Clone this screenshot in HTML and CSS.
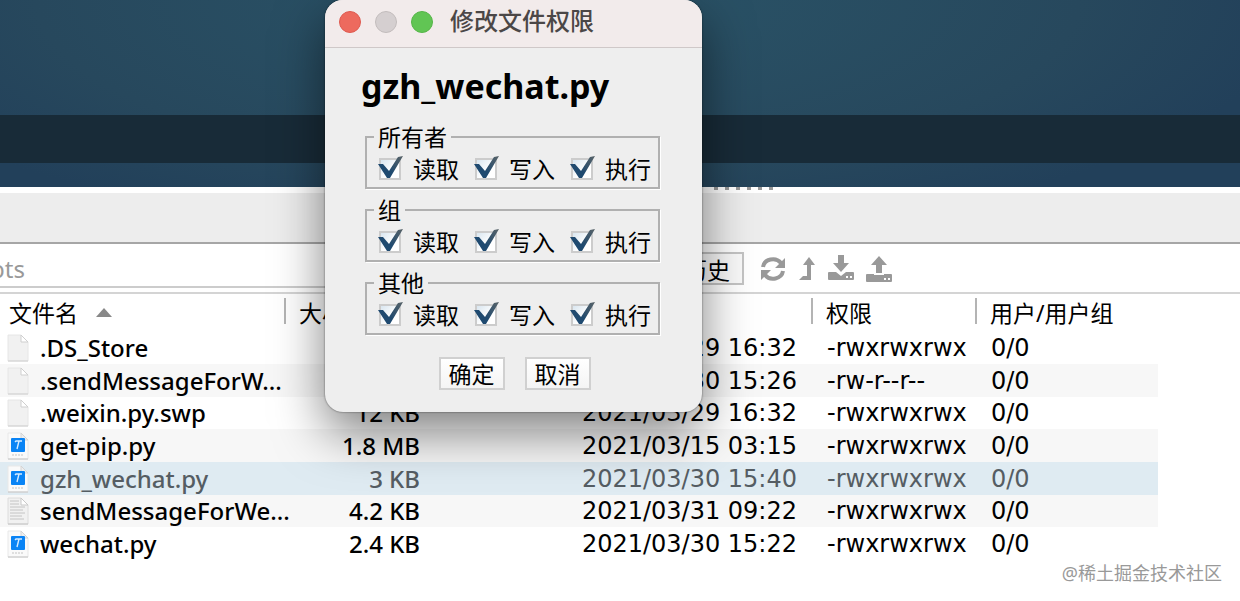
FILE: index.html
```html
<!DOCTYPE html>
<html lang="zh-CN">
<head>
    <meta charset="UTF-8">
    <meta name="viewport" content="width=device-width, initial-scale=1.0">
    <title>修改文件权限</title>
    <link rel="stylesheet" href="styles.css">
</head>
<body>
    <svg class="sprite" aria-hidden="true">
        <symbol id="blank" viewBox="0 0 22 28">
            <path d="M1 1h13l7 7v19H1z" fill="#f1f1f1" stroke="#e6e6e6"/>
            <path d="M1 27h20" stroke="#cfcfcf"/>
            <path d="M14 1v7h7z" fill="#fff" stroke="#cfcfcf"/>
        </symbol>
        <symbol id="python" viewBox="0 0 22 28">
            <path d="M1 1h13l7 7v19H1z" fill="#fafafa" stroke="#e8e8e8"/>
            <path d="M1 27h20" stroke="#c4c4c4"/>
            <path d="M14 1v7h7z" fill="#eee" stroke="#d4d4d4"/>
            <rect x="4" y="6" width="14" height="14" rx="1" fill="#0a84f5"/>
            <path d="M8 10l1-1h6M12 9l-2 8" fill="none" stroke="#d6ebff" stroke-width="1.4"/>
            <path d="M5 23h12" stroke="#c4c4c4" stroke-dasharray="2 1"/>
        </symbol>
        <symbol id="text" viewBox="0 0 22 28">
            <path d="M1 1h13l7 7v19H1z" fill="#f1f1f1" stroke="#dcdcdc"/>
            <path d="M1 27h20" stroke="#c4c4c4"/>
            <path d="M14 1v7h7z" fill="#fff" stroke="#c9c9c9"/>
            <path d="M3 4h9M3 7h9M3 10h15M3 13h13M3 16h15M3 19h12M3 22h14" stroke="#c4c4c4"/>
        </symbol>
    </svg>

    <div class="wallpaper">
        <div class="band"></div>
    </div>
    <div class="splitter"><span class="grip"></span></div>
    <div class="tabs"></div>

    <div class="toolbar">
        <input class="path" type="text" value="pts" aria-label="路径">
        <button class="history">历史</button>
        <button class="icon" aria-label="刷新">
            <svg width="28" height="28" viewBox="0 0 28 28">
                <path d="M4 12a10 9 0 0 1 18-4M24 16a10 9 0 0 1-18 4" fill="none" stroke="#999" stroke-width="4"/>
                <path d="M26 3v10H16zM2 25V15h10z" fill="#999"/>
            </svg>
        </button>
        <button class="icon" aria-label="上级目录">
            <svg width="20" height="28" viewBox="0 0 20 28">
                <path d="M12 2l6 8h-4v15H2l4-4h4V10H6z" fill="#999"/>
            </svg>
        </button>
        <button class="icon" aria-label="下载">
            <svg width="28" height="28" viewBox="0 0 28 28">
                <path d="M11 0h6v8h5l-8 9-8-9h5z" fill="#999"/>
                <path d="M2 17h7l5 4 5-4h7q1 0 1 1v6q0 1-1 1H2q-1 0-1-1v-6q0-1 1-1z" fill="#999"/>
                <path d="M19 22h2M23 22h2" stroke="#fff" stroke-width="2"/>
            </svg>
        </button>
        <button class="icon" aria-label="上传">
            <svg width="28" height="28" viewBox="0 0 28 28">
                <path d="M14 1l8 9h-5v8h-6v-8H6z" fill="#999"/>
                <path d="M2 19h7v1h10v-1h7q1 0 1 1v6q0 1-1 1H2q-1 0-1-1v-6q0-1 1-1z" fill="#999"/>
                <path d="M19 24h2M23 24h2" stroke="#fff" stroke-width="2"/>
            </svg>
        </button>
    </div>

    <table class="files">
        <colgroup>
            <col class="col-name">
            <col class="col-size">
            <col class="col-date">
            <col class="col-perm">
            <col class="col-user">
        </colgroup>
        <thead>
            <tr>
                <th>文件名<span class="sort"></span></th>
                <th>大小</th>
                <th></th>
                <th>权限</th>
                <th>用户/用户组</th>
            </tr>
        </thead>
        <tbody>
            <tr>
                <td><svg class="file"><use href="#blank"/></svg>.DS_Store</td>
                <td class="size"></td>
                <td class="date">2021/03/29 16:32</td>
                <td class="perm">-rwxrwxrwx</td>
                <td class="user">0/0</td>
            </tr>
            <tr>
                <td><svg class="file"><use href="#blank"/></svg>.sendMessageForW...</td>
                <td class="size"></td>
                <td class="date">2021/03/30 15:26</td>
                <td class="perm">-rw-r--r--</td>
                <td class="user">0/0</td>
            </tr>
            <tr>
                <td><svg class="file"><use href="#blank"/></svg>.weixin.py.swp</td>
                <td class="size">12 KB</td>
                <td class="date">2021/03/29 16:32</td>
                <td class="perm">-rwxrwxrwx</td>
                <td class="user">0/0</td>
            </tr>
            <tr>
                <td><svg class="file"><use href="#python"/></svg>get-pip.py</td>
                <td class="size">1.8 MB</td>
                <td class="date">2021/03/15 03:15</td>
                <td class="perm">-rwxrwxrwx</td>
                <td class="user">0/0</td>
            </tr>
            <tr class="selected">
                <td><svg class="file"><use href="#python"/></svg>gzh_wechat.py</td>
                <td class="size">3 KB</td>
                <td class="date">2021/03/30 15:40</td>
                <td class="perm">-rwxrwxrwx</td>
                <td class="user">0/0</td>
            </tr>
            <tr>
                <td><svg class="file"><use href="#text"/></svg>sendMessageForWe...</td>
                <td class="size">4.2 KB</td>
                <td class="date">2021/03/31 09:22</td>
                <td class="perm">-rwxrwxrwx</td>
                <td class="user">0/0</td>
            </tr>
            <tr>
                <td><svg class="file"><use href="#python"/></svg>wechat.py</td>
                <td class="size">2.4 KB</td>
                <td class="date">2021/03/30 15:22</td>
                <td class="perm">-rwxrwxrwx</td>
                <td class="user">0/0</td>
            </tr>
        </tbody>
    </table>

    <div class="watermark">@稀土掘金技术社区</div>

    <div class="dialog" role="dialog" aria-labelledby="dialogTitle">
        <div class="titlebar">
            <button class="light close" aria-label="关闭"></button>
            <button class="light minimize" aria-label="最小化"></button>
            <button class="light zoom" aria-label="缩放"></button>
            <span id="dialogTitle">修改文件权限</span>
        </div>
        <form class="dialog-body">
            <h1>gzh_wechat.py</h1>
            <fieldset>
                <legend>所有者</legend>
                <label><input type="checkbox" checked>读取</label>
                <label><input type="checkbox" checked>写入</label>
                <label><input type="checkbox" checked>执行</label>
            </fieldset>
            <fieldset>
                <legend>组</legend>
                <label><input type="checkbox" checked>读取</label>
                <label><input type="checkbox" checked>写入</label>
                <label><input type="checkbox" checked>执行</label>
            </fieldset>
            <fieldset>
                <legend>其他</legend>
                <label><input type="checkbox" checked>读取</label>
                <label><input type="checkbox" checked>写入</label>
                <label><input type="checkbox" checked>执行</label>
            </fieldset>
            <div class="actions">
                <button type="button">确定</button>
                <button type="button">取消</button>
            </div>
        </form>
    </div>
</body>
</html>
```
FILE: styles.css
```css
* {
    box-sizing: border-box;
}
body {
    margin: 0;
    position: relative;
    min-height: 100vh;
    overflow-x: hidden;
    background-color: #fff;
    color: #000;
    font-family: "Noto Sans", "Noto Sans CJK SC", sans-serif;
    font-size: 24px;
}
button, input {
    font: inherit;
    color: inherit;
    margin: 0;
    padding: 0;
}
.sprite {
    display: none;
}

/* desktop behind the window */
.wallpaper {
    height: 187px;
    padding-top: 115px;
    background: radial-gradient(ellipse 60% 130% at 45% 0, #2a5468, #27485d 70%, #22405a);
}
.band {
    height: 48px;
    background-color: #182b38;
}
.splitter {
    height: 6px;
    background-color: #fff;
}
.grip {
    display: block;
    width: 60px;
    height: 3px;
    margin-left: 714px;
    background: repeating-linear-gradient(90deg, #999 0 4px, transparent 4px 11px);
}
.tabs {
    height: 51px;
    background-color: #ededed;
    border-bottom: 2px solid #a6a6a6;
}

/* toolbar */
.toolbar {
    display: flex;
    align-items: center;
    height: 50px;
    padding-top: 1px;
    border-bottom: 2px solid #d4d4d4;
}
.path {
    width: 640px;
    height: 43px;
    margin: 0 0 5px -10px;
    padding-top: 6px;
    border: 0;
    border-bottom: 2px solid #ccc;
    background: none;
    color: #999;
    outline: none;
}
.history {
    width: 66px;
    height: 33px;
    margin-left: 48px;
    padding: 3px 8px 0 0;
    border: 2px solid #c4c4c4;
    background-color: #fafafa;
    font-size: 23px;
    line-height: 26px;
    white-space: nowrap;
}
.icon {
    display: flex;
    margin-left: 10px;
    border: 0;
    background: none;
}
.history + .icon {
    margin-left: 15px;
}

/* file list */
.files {
    width: 1158px;
    max-width: 100%;
    table-layout: fixed;
    border-collapse: collapse;
}
.col-name {
    width: 284px;
}
.col-size {
    width: 146px;
}
.col-date {
    width: 381px;
}
.col-perm {
    width: 164px;
}
.files th {
    height: 37px;
    padding: 0 0 0 15px;
    font-size: 23px;
    font-weight: 400;
    line-height: 26px;
    text-align: left;
    white-space: nowrap;
    background: linear-gradient(#b4b4b4, #b4b4b4) no-repeat 0 4px / 2px 26px;
}
.files th:first-child {
    padding-left: 9px;
    background: none;
}
.files th:nth-child(3) {
    background: none;
}
.sort {
    display: inline-block;
    margin: 0 0 5px 18px;
    border: 8px solid transparent;
    border-top: 0;
    border-bottom: 9px solid #888;
}
.files td {
    height: 33px;
    padding: 0;
    line-height: 32px;
    white-space: nowrap;
    font-weight: 500;
}
.files tbody tr:nth-child(3n) td {
    height: 32px;
}
.files tbody tr:nth-child(even) {
    background-color: #f7f7f7;
}
.files tbody .selected {
    background-color: #dfebf2;
    color: #555d63;
}
.file {
    width: 22px;
    height: 28px;
    margin: -4px 11px 0 7px;
    vertical-align: -5px;
}
.files .size {
    padding-right: 10px;
    text-align: right;
}
.files .date {
    padding-right: 14px;
    text-align: right;
    font-family: "DejaVu Sans", sans-serif;
}
.files .perm, .files .user {
    padding-left: 16px;
    font-family: "DejaVu Sans", sans-serif;
}
.watermark {
    position: absolute;
    right: 18px;
    bottom: 15px;
    color: #999;
    font-size: 18px;
    line-height: 26px;
}

/* permission dialog */
.dialog {
    position: absolute;
    top: 0;
    left: 325px;
    width: 377px;
    padding-bottom: 22px;
    border-radius: 18px;
    background-color: #eee;
    box-shadow: 0 0 2px rgba(0, 0, 0, 0.6), 0 20px 50px rgba(0, 0, 0, 0.5);
    overflow: hidden;
    color: #000;
    font-size: 23px;
}
.titlebar {
    display: flex;
    align-items: center;
    gap: 14px;
    height: 48px;
    padding: 0 15px 4px 14px;
    border-bottom: 1px solid #cfc8c8;
    background-color: #f2ebeb;
    color: #4b4747;
    font-size: 24px;
    font-weight: 500;
}
.titlebar span {
    margin-left: 3px;
    padding-bottom: 4px;
}
.light {
    width: 22px;
    height: 22px;
    border: 1px solid #de5a50;
    border-radius: 50%;
    background-color: #ed6a5e;
}
.minimize {
    border-color: #c2bcbc;
    background-color: #d5cfd0;
}
.zoom {
    border-color: #56b548;
    background-color: #61c554;
}
.dialog-body {
    padding: 16px 42px 0 40px;
}
.dialog h1 {
    margin: 0 0 17px -4px;
    font-size: 34px;
    line-height: 44px;
}
fieldset {
    display: flex;
    gap: 14px;
    height: 64px;
    margin: 0 0 9px;
    padding: 6px 0 0 10px;
    border: 2px solid #b0b0b0;
    box-shadow: 1px 1px #fff;
}
legend {
    margin-left: -3px;
    padding: 0 4px;
    line-height: 24px;
}
fieldset label {
    display: flex;
    align-items: center;
    height: 28px;
    line-height: 28px;
    white-space: nowrap;
}
fieldset input {
    appearance: none;
    flex: none;
    position: relative;
    width: 26px;
    height: 26px;
    margin-right: 10px;
}
fieldset input::before {
    content: "";
    position: absolute;
    inset: 2px;
    border: 2px solid #ccc;
    background: linear-gradient(135deg, #d9e6f0, #fff 60%);
}
fieldset input:checked::after {
    content: "";
    position: absolute;
    inset: 0;
    background: linear-gradient(to top right, #1f4a70 45%, #5a6468);
    clip-path: polygon(1px 8px, 6px 8px, 12px 15px, 21px 1px, 26px 0, 13px 22px, 10px 22px);
}
.actions {
    display: flex;
    justify-content: center;
    gap: 20px;
    padding: 13px 0 0 4px;
}
.actions button {
    width: 66px;
    height: 33px;
    border: 2px solid #d0d0d0;
    background: linear-gradient(#fff, #f4f4f4);
    line-height: 28px;
}
```
